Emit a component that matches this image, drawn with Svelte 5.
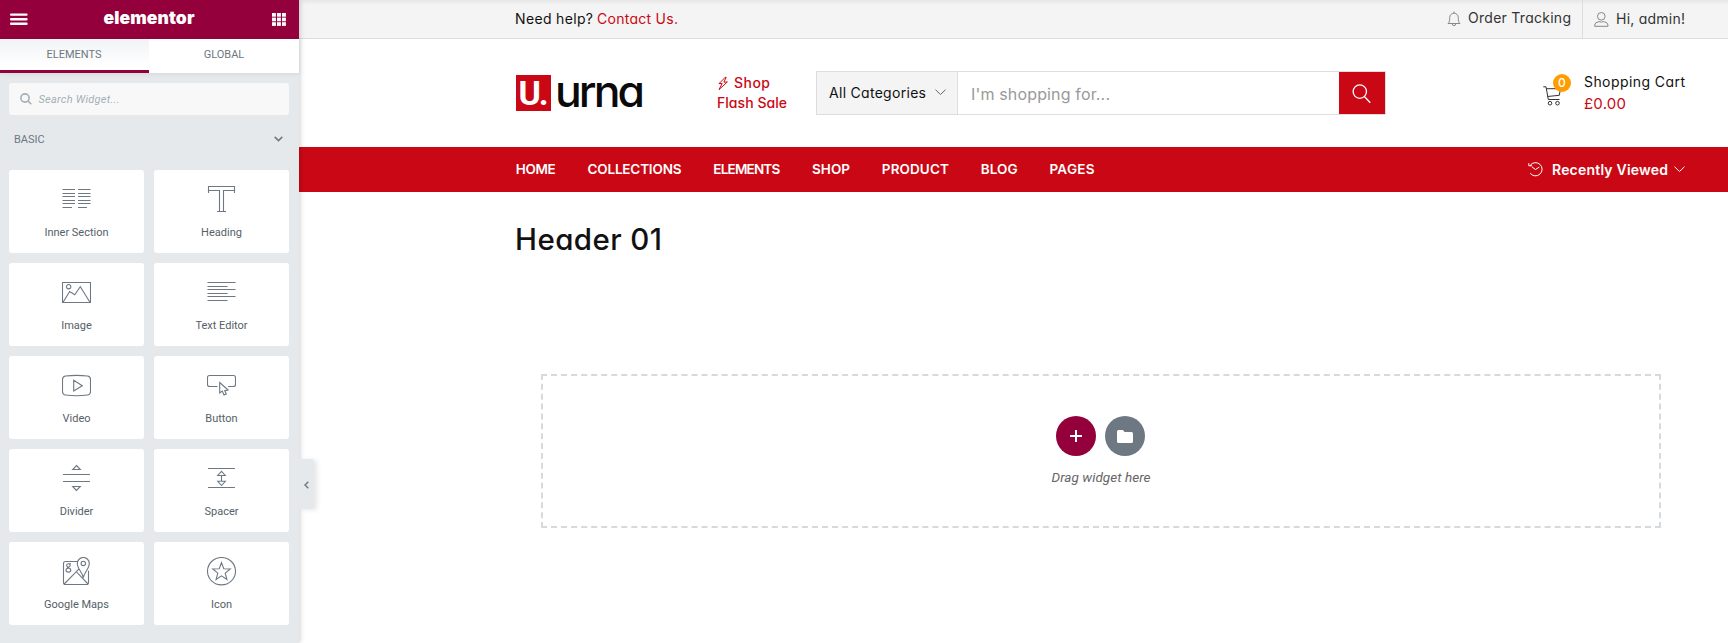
<script>
  const widgets = [
    { name: 'Inner Section', icon: 'section' },
    { name: 'Heading', icon: 'heading' },
    { name: 'Image', icon: 'image' },
    { name: 'Text Editor', icon: 'text' },
    { name: 'Video', icon: 'video' },
    { name: 'Button', icon: 'button' },
    { name: 'Divider', icon: 'divider' },
    { name: 'Spacer', icon: 'spacer' },
    { name: 'Google Maps', icon: 'maps' },
    { name: 'Icon', icon: 'star' }
  ];

  const icons = {
    section: 'M.5 4.5H13M.5 8.5H13M.5 11.5H13M.5 15.5H13M.5 18.5H13M.5 22.5H10M16 4.5H28.5M16 8.5H28.5M16 11.5H28.5M16 15.5H28.5M16 18.5H28.5M16 22.5H25',
    heading: 'M1.5 8V1.5H27.5V8M1.5 5.5H12.5V26.5M27.5 5.5H16.5V26.5M10 26.5H19',
    image: 'M.5 4.5H28.5V24.5H.5ZM1.2 24L7.7 13.5L12.7 16.7L18.3 8.7L27.8 24M4.5 8.7a2.2 2.2 0 1 0 4.4 0a2.2 2.2 0 1 0-4.4 0',
    text: 'M.5 4.5H28.5M.5 8.5H20.5M.5 11.5H28.5M.5 15.5H20.5M.5 18.5H28.5M.5 22.5H20.5',
    video: 'M3.5 5Q14.5 3.8 25.5 5Q28.5 5.4 28.5 8.5V20.5Q28.5 23.6 25.5 24Q14.5 25.4 3.5 24Q.5 23.6 .5 20.5V8.5Q.5 5.4 3.5 5ZM11.7 9.3L20.3 14.7L11.7 20Z',
    button: 'M10.5 15.5H2.5Q.5 15.5 .5 13.5V6.5Q.5 4.5 2.5 4.5H26.5Q28.5 4.5 28.5 6.5V13.5Q28.5 15.5 26.5 15.5H21M12.7 11.5V22L15.3 20L17 24L19.3 23L17.7 19.6L21.1 19Z',
    divider: 'M14.5 1.5L18.3 5.5H10.7ZM1 10.5H28M1 17.5H28M14.5 26.5L10.7 22.5H18.3Z',
    spacer: 'M1 4.5H28M1 23.5H28M14.5 7.3L18.3 11.5H10.7ZM14.5 21.5L10.7 17.3H18.3ZM14.5 11.5V17.3',
    maps: 'M15.7 4.5H3.5Q1.5 4.5 1.5 6.5V25.5Q1.5 27.5 3.5 27.5H24.5Q26.5 27.5 26.5 25.5V13.7M2.2 27L14.3 14.7L26 27M14.3 14.7L17.2 11.6M21.3 20.7C20.8 15.8 15.3 11.8 15.3 6.5a6 6 0 0 1 12 0C27.3 11.8 21.8 15.8 21.3 20.7ZM19.1 6.4a2.2 2.2 0 1 0 4.4 0a2.2 2.2 0 1 0-4.4 0M4.7 8.4a1.7 1.7 0 1 0 3.4 0a1.7 1.7 0 1 0-3.4 0M6.4 6.7H9M5.4 10.1L5.8 11.4M4 13.2a2.4 1.9 0 1 0 4.8 0a2.4 1.9 0 1 0-4.8 0',
    star: 'M.5 14.2a14 13.7 0 1 0 28 0a14 13.7 0 1 0-28 0M14.5 5.6L16.8 11.7L23.3 12L18.2 16.1L19.9 22.4L14.5 18.8L9.1 22.4L10.8 16.1L5.7 12L12.2 11.7Z'
  };

  const menu = [
    { label: 'HOME', width: 40 },
    { label: 'COLLECTIONS', width: 94 },
    { label: 'ELEMENTS', width: 67 },
    { label: 'SHOP', width: 38 },
    { label: 'PRODUCT', width: 67 },
    { label: 'BLOG', width: 37 },
    { label: 'PAGES', width: 45 }
  ];

  // Tracks a label out or in so that it takes the given width.
  function fit(node, width) {
    const gaps = node.textContent.length - 1;
    const spacing = (width - node.getBoundingClientRect().width) / gaps;
    node.style.letterSpacing = `${spacing}px`;
    node.style.marginRight = `${-spacing}px`;
  }
</script>

<div class="page">
  <aside class="panel">
    <header class="panel-head">
      <svg width="18" height="13" viewBox="0 0 18 13" fill="#fff"><rect y="0.4" width="17.6" height="2.4" rx="1" /><rect y="5" width="17.6" height="2.4" rx="1" /><rect y="9.6" width="17.6" height="2.4" rx="1" /></svg>
      <span class="wordmark"><span class="fit" use:fit={91}>elementor</span></span>
      <svg width="14" height="13" viewBox="0 0 14 13" fill="#fff">
        {#each [0, 5, 10] as x}{#each [0, 4.6, 9.2] as y}<rect {x} {y} width="3.9" height="3.7" />{/each}{/each}
      </svg>
    </header>
    <div class="tabs">
      <div class="tab active"><span class="fit" use:fit={55}>ELEMENTS</span></div>
      <div class="tab"><span class="fit" use:fit={40.5}>GLOBAL</span></div>
    </div>
    <div class="panel-body">
      <div class="widget-search">
        <svg width="12" height="12" viewBox="0 0 12 12" fill="none" stroke="#a4afb7" stroke-width="1.6"><circle cx="5" cy="5" r="4.1" /><path d="M8 8L11.3 11.2" /></svg>
        <span class="fit" use:fit={81}>Search Widget...</span>
      </div>
      <div class="category">
        <span>BASIC</span>
        <svg width="9" height="6" viewBox="0 0 9 6" fill="none" stroke="#6d7882" stroke-width="1.5"><path d="M.7 .9L4.5 4.6L8.3 .9" /></svg>
      </div>
      <div class="grid">
        {#each widgets as w}
          <div class="card">
            <svg width="29" height="29" viewBox="0 0 29 29"><path d={icons[w.icon]} /></svg>
            <span>{w.name}</span>
          </div>
        {/each}
      </div>
    </div>
    <div class="toggle">
      <svg width="5" height="8" viewBox="0 0 5 8" fill="none" stroke="#6d7882" stroke-width="1.4"><path d="M4.3 .7L1 4L4.3 7.3" /></svg>
    </div>
  </aside>

  <main>
    <div class="topbar">
      <div class="help"><span class="fit" use:fit={78}>Need help?</span><a class="fit" use:fit={81}>Contact Us.</a></div>
      <div class="tracking">
        <svg width="14" height="16" viewBox="0 0 14 16" fill="none" stroke="#888"><path d="M1 12.5C2.5 11.3 2.7 9.5 2.7 6.5a4.3 4.3 0 0 1 8.6 0c0 3 .2 4.8 1.7 6ZM7 2.2V.5M5.2 12.8a1.8 1.8 0 0 0 3.6 0" /></svg>
        <span class="fit" use:fit={103}>Order Tracking</span>
      </div>
      <div class="account">
        <svg width="15" height="15" viewBox="0 0 15 15" fill="none" stroke="#888"><circle cx="7.3" cy="4.3" r="3.8" /><path d="M.7 14.3V13Q1 10.2 5 9.6Q7.3 10.6 9.6 9.6Q13.7 10.2 14 13V14.3Z" /></svg>
        <span class="fit" use:fit={69}>Hi, admin!</span>
      </div>
    </div>

    <div class="masthead">
      <div class="logo">
        <div class="logo-mark"><span class="fit" use:fit={30}>U.</span></div>
        <div class="logo-name"><span class="fit" use:fit={90}>urna</span></div>
      </div>
      <div class="flash">
        <div class="flash-line">
          <svg width="12" height="15" viewBox="0 0 12 15" fill="none" stroke="#ca0815" stroke-linejoin="round"><path d="M8.6 1L2 7.6L5.2 7.4L2 13.6L10.4 5.9L6.9 6.2L9.2 1.2Z" /></svg>
          <span class="fit" use:fit={36}>Shop</span>
        </div>
        <div class="flash-line"><span class="fit" use:fit={70}>Flash Sale</span></div>
      </div>
      <div class="search">
        <div class="cats">
          <span class="fit" use:fit={97}>All Categories</span>
          <svg width="11" height="7" viewBox="0 0 11 7" fill="none" stroke="#666"><path d="M.5 .7L5.5 5.5L10.5 .7" /></svg>
        </div>
        <div class="query"><span class="fit" use:fit={139}>I'm shopping for...</span></div>
        <div class="go">
          <svg width="19" height="20" viewBox="0 0 19 20" fill="none" stroke="#fff" stroke-width="1.3"><circle cx="7.8" cy="7.6" r="6.7" /><path d="M12.6 12.8L18.3 18.8" /></svg>
        </div>
      </div>
      <div class="cart">
        <div class="cart-icon">
          <svg width="19" height="20" viewBox="0 0 19 20" fill="none" stroke="#333"><path d="M.3 .8H3L5.3 13.5H16.5M3.4 2.7H17.5L16.3 9.3L4.6 10.5" /><circle cx="7" cy="17.2" r="1.8" /><circle cx="14.5" cy="17.2" r="1.8" /></svg>
          <span class="badge">0</span>
        </div>
        <div class="cart-text">
          <span class="fit" use:fit={101}>Shopping Cart</span>
          <span class="fit total" use:fit={42}>£0.00</span>
        </div>
      </div>
    </div>

    <nav>
      {#each menu as m}<span class="fit" use:fit={m.width}>{m.label}</span>{/each}
      <div class="recent">
        <svg width="15" height="15" viewBox="0 0 15 15" fill="none" stroke="#fff"><path d="M2.2 3.3A6.6 6.6 0 1 1 2.2 11.2M.8 1.2V3.8H4.2M4 5L7.5 7.5L11.3 5.1" /></svg>
        <span class="fit" use:fit={116}>Recently Viewed</span>
        <svg class="chev" width="11" height="7" viewBox="0 0 11 7" fill="none" stroke="#fff"><path d="M.5 .7L5.5 5.5L10.5 .7" /></svg>
      </div>
    </nav>

    <h1><span class="fit" use:fit={147}>Header 01</span></h1>

    <section class="drop">
      <div class="actions">
        <div class="round add"><svg width="12" height="12" viewBox="0 0 12 12" fill="#fff"><path d="M5 0H7V5H12V7H7V12H5V7H0V5H5Z" /></svg></div>
        <div class="round"><svg width="16" height="13" viewBox="0 0 16 13" fill="#fff"><path d="M1.5 0H5.8L7.6 2H14.4Q16 2 16 3.6V11.4Q16 13 14.4 13H1.6Q0 13 0 11.4V1.6Q0 0 1.5 0Z" /></svg></div>
      </div>
      <p><span class="fit" use:fit={99}>Drag widget here</span></p>
    </section>
  </main>
</div>

<style>
  :global(body) { background: #fff; overflow: hidden; }
  .page { display: flex; height: 643px; font-family: Inter, sans-serif; font-feature-settings: 'cv11'; font-size: 14px; color: #111; }
  svg { display: block; flex: none; }
  .fit { display: inline-block; white-space: nowrap; }

  .panel { position: relative; z-index: 2; display: flex; flex-direction: column; width: 299px; flex: none; background: #e6e9ec; font-family: Roboto, sans-serif; font-size: 11px; box-shadow: 1px 0 5px rgba(0, 0, 0, 0.2); }
  .panel-head { display: flex; align-items: center; justify-content: space-between; height: 39px; padding: 0 13px 0 10px; background: #93003c; box-sizing: border-box; flex: none; }
  .wordmark { margin-right: 2px; font: 900 17.5px/35px Inter, sans-serif; color: #fff; height: 39px; }
  .tabs { display: flex; height: 34px; flex: none; background: #fff; box-shadow: 0 1px 5px rgba(0, 0, 0, 0.08); }
  .tab { flex: 1; box-sizing: border-box; padding: 2px 0 0 0; text-align: center; line-height: 28px; color: #6d7882; }
  .active { flex: none; width: 149px; padding-right: 1px; border-bottom: 3px solid #93003c; background: linear-gradient(#f1f3f5, #fff 85%); }
  .panel-body { padding: 10px 10px 0 9px; }
  .widget-search { display: flex; align-items: center; gap: 7px; height: 32px; padding-left: 10.5px; border-radius: 3px; background: #f8f8f8; font-style: italic; color: #a4afb7; }
  .category { display: flex; align-items: center; justify-content: space-between; height: 48px; margin-bottom: 7px; padding: 0 6px 0 5px; color: #6d7882; }
  .grid { display: grid; grid-template-columns: 135px 135px; grid-auto-rows: 83px; gap: 10px; }
  .card { display: flex; flex-direction: column; align-items: center; box-sizing: border-box; padding-top: 15px; border-radius: 3px; background: #fff; color: #556068; }
  .card path { fill: none; stroke: #6d7882; stroke-width: 1.1; }
  .card span { margin-top: 12px; line-height: 13px; }
  .toggle { position: absolute; left: 299px; top: 459px; display: flex; align-items: center; justify-content: center; box-sizing: border-box; width: 15px; height: 50px; padding-top: 2px; border-radius: 0 3px 3px 0; background: #e6e9ec; box-shadow: 3px 1px 5px rgba(0, 0, 0, 0.1); }

  main { flex: 1; min-width: 0; }
  .topbar { display: flex; box-sizing: border-box; height: 39px; padding: 0 43px 0 216px; border-bottom: 1px solid #ddd; background: linear-gradient(#e6e6e6, #f4f4f4 5px); line-height: 38px; color: #333; }
  .help { display: flex; gap: 4px; margin-right: auto; color: #111; }
  .help a { color: #ca0815; }
  .tracking, .account { display: flex; align-items: center; gap: 7px; }
  .tracking { padding-right: 11px; border-right: 1px solid #ddd; }
  .tracking .fit { margin-top: -2px; }
  .account { padding-left: 11px; }

  .masthead { display: flex; height: 108px; padding: 0 43px 0 217px; }
  .logo { display: flex; margin-top: 36px; width: 201px; height: 36px; }
  .logo-mark { width: 35px; height: 36px; background: #ca0815; color: #fff; font: 700 34px/36px Roboto, sans-serif; text-align: center; }
  .logo-name { margin-left: 4px; color: #0a0a0a; font: 500 44.5px/32px Inter, sans-serif; font-feature-settings: 'cv11'; }
  .flash { margin-top: 34px; width: 99px; font-weight: 500; line-height: 20px; color: #ca0815; }
  .flash-line { display: flex; align-items: center; gap: 5px; }
  .search { display: flex; box-sizing: border-box; width: 570px; height: 44px; margin-top: 32px; border: 1px solid #ddd; }
  .cats { display: flex; align-items: center; justify-content: space-between; box-sizing: border-box; width: 141px; padding: 0 11px 1px 12px; border-right: 1px solid #ddd; background: #f4f4f4; }
  .query { flex: 1; padding: 1px 0 0 13px; font-size: 16px; line-height: 42px; color: #999; }
  .go { display: flex; align-items: center; justify-content: center; box-sizing: border-box; width: 46px; padding: 1px 2px 0 0; background: #ca0815; }
  .cart { display: flex; margin-left: auto; gap: 22px; }
  .cart-icon { position: relative; width: 19px; padding-top: 47px; }
  .badge { position: absolute; left: 10px; top: 35px; width: 18px; height: 18px; border-radius: 50%; background: #ff9c00; color: #fff; font-size: 12px; font-weight: 500; line-height: 18px; text-align: center; }
  .cart-text { display: flex; flex-direction: column; align-items: flex-start; padding-top: 33px; line-height: 20px; }
  .total { margin-top: 2px; font-size: 15px; color: #ca0815; }

  nav { display: flex; align-items: center; gap: 31.8px; box-sizing: border-box; height: 45px; padding: 0 43px 1px 216.7px; background: #ca0815; color: #fff; font-weight: 600; font-size: 13.5px; }
  .recent { display: flex; align-items: center; margin-left: auto; gap: 9px; font-size: 14px; }
  .chev { margin-left: -3px; }
  h1 { margin: 29px 0 0 216px; font-size: 29.5px; font-weight: 500; line-height: 36px; }
  .drop { display: flex; flex-direction: column; align-items: center; box-sizing: border-box; width: 1120px; height: 154px; margin: 117px 0 0 242px; padding-top: 40px; border: 2px dashed #d5dadf; }
  .actions { display: flex; gap: 9px; margin-right: 1px; }
  .round { display: flex; align-items: center; justify-content: center; width: 40px; height: 40px; border-radius: 50%; background: #6d7882; }
  .add { background: #93003c; }
  p { margin: 12px 0 0; font: italic 400 13.5px/18px Roboto, sans-serif; color: #666; }
</style>
